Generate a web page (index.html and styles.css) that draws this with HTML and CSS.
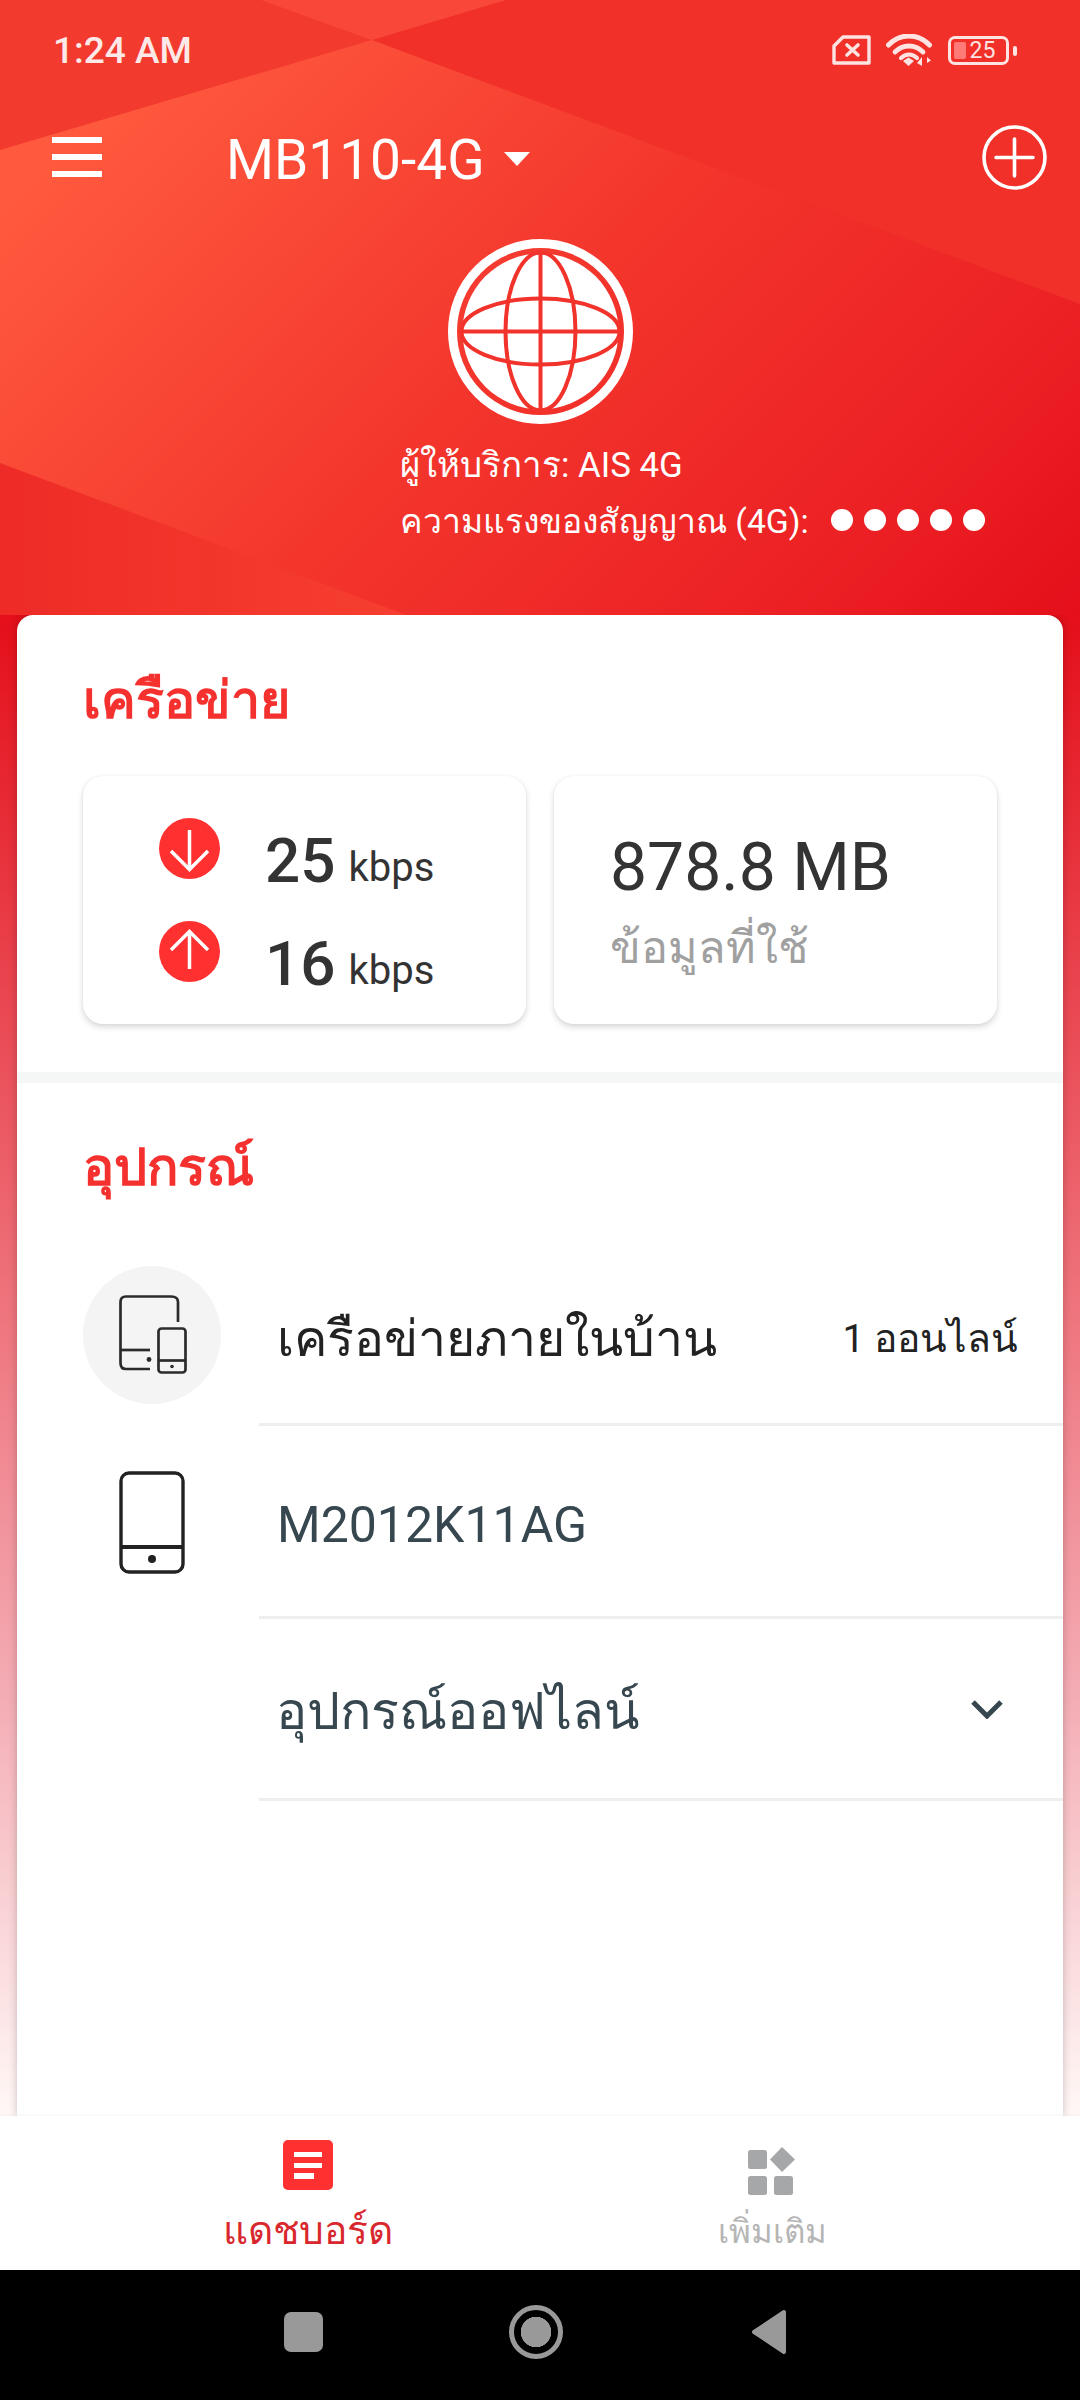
FILE: index.html
```html
<!DOCTYPE html>
<html lang="th">
<head>
<meta charset="utf-8">
<title>MB110-4G</title>
<link rel="stylesheet" href="styles.css">
</head>
<body>
<div class="app">
  <header class="hero">
    <svg class="facets" viewBox="0 0 1080 615" preserveAspectRatio="none" aria-hidden="true">
      <defs>
        <linearGradient id="heroGrad" gradientUnits="userSpaceOnUse" x1="0" y1="200" x2="747" y2="947">
          <stop offset="0" stop-color="#ff5a3e"/>
          <stop offset="0.45" stop-color="#f3352c"/>
          <stop offset="0.8" stop-color="#ec2024"/>
          <stop offset="1" stop-color="#e40f1a"/>
        </linearGradient>
        <linearGradient id="lowGrad" gradientUnits="userSpaceOnUse" x1="0" y1="615" x2="406" y2="615">
          <stop offset="0" stop-color="#ee2b27"/>
          <stop offset="1" stop-color="#f63f30"/>
        </linearGradient>
      </defs>
      <rect width="1080" height="615" fill="url(#heroGrad)"/>
      <polygon points="0,0 262,0 372,40 0,150" fill="#f23a2e"/>
      <polygon points="262,0 506,0 372,40" fill="#f9483a"/>
      <polygon points="506,0 1080,0 1080,304 372,40" fill="#f03029"/>
      <polygon points="0,463 406,615 0,615" fill="url(#lowGrad)"/>
    </svg>

    <div class="status">
      <span class="clock">1:24 AM</span>
      <div class="status-icons">
        <svg class="ic-sim" viewBox="0 0 40 30"><path d="M12 2 H38 V28 H3 V11 Z" fill="none" stroke="#fde3e1" stroke-width="3.4" stroke-linejoin="round"/><path d="M16 10 L27 20 M27 10 L16 20" stroke="#fde3e1" stroke-width="3.6" stroke-linecap="round"/></svg>
        <svg class="ic-wifi" viewBox="0 0 46 33"><g fill="none" stroke="#fde3e1" stroke-linecap="round"><path d="M2.500 11 C14 -1 32 -1 43.500 11" stroke-width="5"/><path d="M9 18 C17 10 29 10 37 18" stroke-width="4.800"/><path d="M15 24 C20 19.500 26 19.500 31 24" stroke-width="4.200"/></g><path d="M17 27 L22.5 23.5 L28 27 L22.5 32 Z" fill="#fde3e1"/><path d="M36 23 V32 L31 29 Z M39 22 V32 M41 23 L45 26.5 L41 29 Z" fill="#fde3e1"/></svg>
        <div class="battery"><span class="battery-fill"></span><span class="battery-num">25</span></div>
      </div>
    </div>

    <div class="toolbar">
      <div class="burger"><span></span><span></span><span></span></div>
      <h1 class="device-name">MB110-4G</h1>
      <span class="caret"></span>
      <svg class="ic-add" viewBox="0 0 65 65"><circle cx="32.5" cy="32.5" r="30.5" fill="none" stroke="#fff" stroke-width="3.6"/><path d="M14 32.5 H51 M32.5 14 V51" stroke="#fff" stroke-width="3.6" stroke-linecap="round"/></svg>
    </div>

    <svg class="globe" viewBox="0 0 185 185">
      <circle cx="92.5" cy="92.5" r="88" fill="none" stroke="#fff" stroke-width="9"/>
      <circle cx="92.5" cy="92.5" r="78" fill="#fff"/>
      <g fill="none" stroke="#f2332b" stroke-width="4">
        <ellipse cx="92.5" cy="92.5" rx="35" ry="79"/>
        <ellipse cx="92.5" cy="92.5" rx="79" ry="33"/>
        <path d="M92.5 12 V173 M12 92.5 H173"/>
      </g>
    </svg>

    <div class="carrier">
      <p class="carrier-line">ผู้ให้บริการ: AIS 4G</p>
      <div class="signal-line">
        <span class="signal-text">ความแรงของสัญญาณ (4G):</span>
        <div class="dots"><i></i><i></i><i></i><i></i><i></i></div>
      </div>
    </div>
  </header>

  <main class="sheet">
    <section class="network">
      <h2 class="section-title">เครือข่าย</h2>
      <div class="stat-cards">
        <div class="stat-card speeds">
          <div class="speed">
            <svg class="arrow" viewBox="0 0 61 61"><circle cx="30.5" cy="30.5" r="30.5" fill="#ff3030"/><path d="M30.5 12 V51 M12 33 L30.5 51.500 L49 33" fill="none" stroke="#fff" stroke-width="3.500"/></svg>
            <span class="speed-num">25</span><span class="speed-unit">kbps</span>
          </div>
          <div class="speed">
            <svg class="arrow" viewBox="0 0 61 61"><circle cx="30.5" cy="30.5" r="30.5" fill="#ff3030"/><path d="M30.5 48 V11 M12 29 L30.5 10.500 L49 29" fill="none" stroke="#fff" stroke-width="3.500"/></svg>
            <span class="speed-num">16</span><span class="speed-unit">kbps</span>
          </div>
        </div>
        <div class="stat-card usage">
          <div class="usage-num">878.8 MB</div>
          <div class="usage-label">ข้อมูลที่ใช้</div>
        </div>
      </div>
    </section>

    <section class="devices">
      <h2 class="section-title">อุปกรณ์</h2>
      <div class="row row-home">
        <div class="row-icon">
          <div class="icon-disc">
            <svg class="ic-devices" viewBox="0 0 68 79"><g fill="none" stroke="#2b2b2b" stroke-width="2.700"><path d="M31 74 H7 Q1.500 74 1.500 68 V7 Q1.500 1.500 7 1.500 H52 Q59 1.500 59 7 V27"/><path d="M1.500 55 H31"/><rect x="39.500" y="33.500" width="27" height="44" rx="3"/><path d="M39.500 65.500 H66.500"/></g><circle cx="30" cy="64.500" r="2.400" fill="#2b2b2b"/><circle cx="53" cy="71.500" r="1.800" fill="#2b2b2b"/></svg>
          </div>
        </div>
        <div class="row-body"><span class="row-title dark">เครือข่ายภายในบ้าน</span><span class="row-meta">1 ออนไลน์</span></div>
      </div>
      <div class="row row-phone">
        <div class="row-icon">
          <svg class="ic-phone" viewBox="0 0 66 103"><g fill="none" stroke="#222" stroke-width="3.400"><rect x="2" y="2" width="62" height="99" rx="8"/><path d="M2 76 H64" stroke-width="4"/></g><circle cx="33" cy="88" r="4" fill="#222"/></svg>
        </div>
        <div class="row-body"><span class="row-title slate">M2012K11AG</span></div>
      </div>
      <div class="row row-offline">
        <div class="row-icon"></div>
        <div class="row-body"><span class="row-title slate">อุปกรณ์ออฟไลน์</span>
          <svg class="ic-chevron" viewBox="0 0 32 20"><path d="M2 3 L16 17 L30 3" fill="none" stroke="#37474f" stroke-width="5"/></svg>
        </div>
      </div>
    </section>
  </main>

  <nav class="tabbar">
    <div class="tab">
      <svg class="tab-icon" viewBox="0 0 50 50"><rect width="50" height="50" rx="5" fill="#ff3030"/><path d="M11 12 H39 V17 H11 Z M11 23 H39 V28 H11 Z M11 33 H31 V39 H11 Z" fill="#fff"/></svg>
      <span class="tab-label active">แดชบอร์ด</span>
    </div>
    <div class="tab">
      <svg class="tab-icon" viewBox="0 0 50 50"><g fill="#a6a7a9"><rect x="1" y="10" width="19" height="19" rx="2.500"/><path d="M35 7 L48 19.500 L35 32 L23 19.500 Z"/><rect x="1" y="36" width="19" height="19" rx="2.500"/><rect x="27" y="36" width="19" height="19" rx="2.500"/></g></svg>
      <span class="tab-label">เพิ่มเติม</span>
    </div>
  </nav>

  <div class="sysnav">
    <span class="nav-square"></span>
    <span class="nav-home"></span>
    <svg class="nav-back" viewBox="0 0 36 46"><path d="M33 3 V43 L3 23 Z" fill="#999" stroke="#999" stroke-width="4" stroke-linejoin="round"/></svg>
  </div>
</div>
</body>
</html>
```

FILE: styles.css
```css
* { box-sizing: border-box; }
html, body { margin: 0; padding: 0; }
body { font-family: Roboto, "Noto Sans", sans-serif; }

.app {
  width: 1080px;
  height: 2400px;
  display: flex;
  flex-direction: column;
  overflow: hidden;
  background: linear-gradient(180deg, #e40f1a 615px, #f4adb5 1700px, #fff8f6 2116px);
}

/* hero */
.hero {
  position: relative;
  height: 615px;
  flex: none;
  color: #fff;
  display: flex;
  flex-direction: column;
  align-items: center;
}
.facets { position: absolute; inset: 0; width: 100%; height: 100%; }
.status, .toolbar, .globe, .carrier { position: relative; }

.status {
  width: 100%;
  height: 100px;
  display: flex;
  justify-content: space-between;
  align-items: center;
  padding: 0 71px 0 53px;
}
.clock { font-size: 37px; font-weight: 500; color: #fde9e7; }
.status-icons { display: flex; align-items: center; gap: 14px; }
.ic-sim { width: 40px; height: 30px; margin-right: 1px; }
.ic-wifi { width: 46px; height: 33px; margin-right: 2px; }
.battery {
  position: relative;
  width: 61px;
  height: 29px;
  border: 3px solid #fde3e1;
  border-radius: 7px;
  display: flex;
  align-items: center;
  justify-content: center;
}
.battery::after {
  content: "";
  position: absolute;
  left: 62px;
  top: 7px;
  width: 4px;
  height: 10px;
  border-radius: 2px;
  background: #fde3e1;
}
.battery-fill {
  position: absolute;
  left: 3px;
  top: 3px;
  bottom: 3px;
  width: 12px;
  background: #ff7a76;
  border-radius: 2px;
}
.battery-num { position: relative; font-size: 23px; color: #fde3e1; margin-left: 8px; }

.toolbar {
  width: 100%;
  height: 70px;
  margin-top: 22px;
  display: flex;
  align-items: center;
  padding: 0 33px 0 52px;
}
.burger { width: 50px; display: flex; flex-direction: column; gap: 11px; }
.burger span { display: block; height: 6px; background: #fff; }
.device-name { margin: 6px 0 0 124px; font-size: 55px; font-weight: 400; line-height: 70px; white-space: nowrap; }
.caret {
  margin: 4px 0 0 19px;
  border-left: 13px solid transparent;
  border-right: 13px solid transparent;
  border-top: 14px solid #fff;
}
.ic-add { width: 65px; height: 65px; margin-left: auto; }

.globe { width: 185px; height: 185px; margin-top: 47px; flex: none; }

.carrier {
  width: 100%;
  padding-left: 400px;
  margin-top: 19px;
  font-size: 34px;
}
.carrier-line { margin: 0; height: 44px; font-size: 34.8px; line-height: 44px; white-space: nowrap; }
.signal-line { display: flex; align-items: center; margin-top: 14px; height: 40px; white-space: nowrap; }
.signal-text { width: 431px; font-size: 33.7px; }
.dots { display: flex; gap: 11px; margin-top: -2px; }
.dots i { display: block; width: 22px; height: 22px; border-radius: 50%; background: #fff; }

/* sheet */
.sheet {
  flex: 1;
  min-height: 0;
  margin: 0 17px;
  background: #fff;
  border-radius: 16px 16px 0 0;
  box-shadow: 0 0 8px rgba(0,0,0,.22);
}
.network { height: 468px; padding: 0 66px; border-bottom: 11px solid #f5f6f6; }
.section-title {
  margin: 0;
  color: #f5312f;
  font-size: 52px;
  font-weight: 700;
  white-space: nowrap;
}
.network .section-title { height: 161px; padding-top: 51px; line-height: 70px; }
.stat-cards { display: flex; gap: 28px; width: 914px; }
.stat-card {
  width: 443px;
  height: 248px;
  background: #fff;
  border-radius: 20px;
  box-shadow: 0 3px 6px rgba(0,0,0,.16), 0 0 2px rgba(0,0,0,.06);
}
.speeds { padding: 42px 0 0 76px; display: flex; flex-direction: column; gap: 42px; }
.speed { display: flex; align-items: center; height: 61px; }
.arrow { width: 61px; height: 61px; flex: none; margin-right: 45px; }
.speed-num { font-size: 62px; font-weight: 500; color: #333; position: relative; top: 12px; }
.speed-unit { font-size: 40px; color: #333; margin-left: 13px; position: relative; top: 19px; }
.usage { padding: 52px 0 0 56px; }
.usage-num { font-size: 66px; line-height: 80px; color: #333; white-space: nowrap; }
.usage-label { font-size: 45px; line-height: 60px; color: #a0a0a0; margin-top: 10px; white-space: nowrap; }

.devices .section-title { height: 163px; padding: 50px 0 0 66px; line-height: 70px; }
.row { display: flex; }
.row-icon { width: 242px; flex: none; display: flex; align-items: center; padding-left: 66px; }
.row-body {
  flex: 1;
  display: flex;
  align-items: center;
  justify-content: space-between;
  padding: 7px 45px 0 18px;
  border-bottom: 3px solid #eeeeee;
  white-space: nowrap;
}
.row-home { height: 180px; }
.row-phone { height: 193px; }
.row-offline { height: 182px; }
.row-offline .row-body { padding-top: 4px; padding-left: 17px; }
.row-offline .row-title { font-size: 52px; }
.icon-disc {
  width: 138px;
  height: 138px;
  border-radius: 50%;
  background: #f4f4f4;
  display: flex;
  align-items: center;
  justify-content: center;
  margin-top: -3px;
}
.ic-devices { width: 68px; height: 79px; margin-left: 1px; }
.ic-phone { width: 66px; height: 103px; margin-left: 36px; }
.row-title { font-size: 50px; }
.row-title.dark { color: #222; }
.row-title.slate { color: #37474f; }
.row-meta { font-size: 39px; color: #222; }
.ic-chevron { width: 32px; height: 20px; margin-right: 15px; margin-top: -3px; }

/* bottom */
.tabbar {
  flex: none;
  height: 154px;
  padding: 0 76px;
  background: #fff;
  display: grid;
  grid-template-columns: 1fr 1fr;
  box-shadow: 0 -1px 3px rgba(0,0,0,.04);
  position: relative;
}
.tab { display: flex; flex-direction: column; align-items: center; padding-top: 24px; }
.tab-icon { width: 50px; height: 50px; overflow: visible; }
.tab-label { margin-top: 19px; font-size: 33px; line-height: 46px; color: #b5b5b5; white-space: nowrap; }
.tab-label.active { margin-top: 18px; font-size: 39px; color: #d9272e; }

.sysnav { flex: none; height: 130px; background: #000; display: flex; align-items: center; padding: 0 0 6px 284px; }
.nav-square { width: 39px; height: 40px; border-radius: 7px; background: #999; }
.nav-home {
  width: 54px;
  height: 54px;
  margin-left: 186px;
  border-radius: 50%;
  border: 5px solid #999;
  background: radial-gradient(circle, #999 0 15px, #000 15.500px);
}
.nav-back { width: 36px; height: 46px; margin-left: 188px; }
```
